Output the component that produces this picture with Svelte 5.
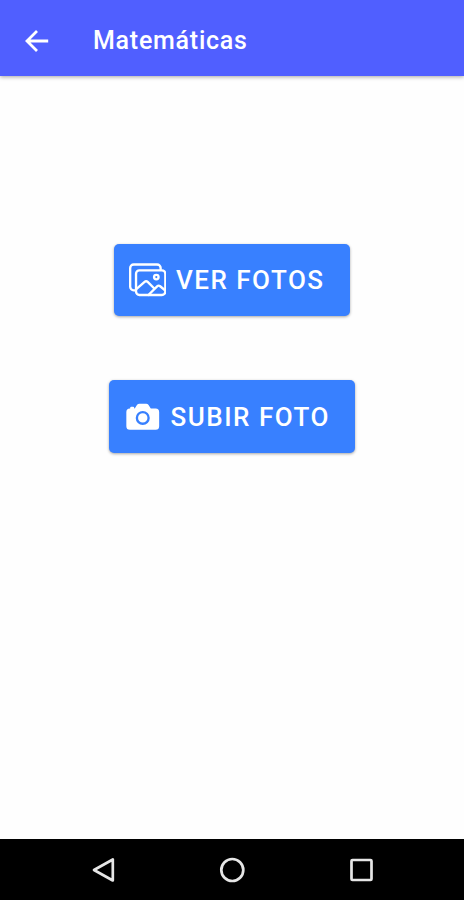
<script lang="ts">
  let title = 'Matemáticas';

  let actions = [
    { icon: 'images', label: 'Ver fotos' },
    { icon: 'camera', label: 'Subir foto' }
  ];
</script>

<div class="screen">
  <header class="toolbar">
    <button class="back" aria-label="Volver">
      <svg viewBox="0 0 24 24" width="24" height="24">
        <path d="M23.2 12H2.5M12 2L2 12l10 10" fill="none" stroke="currentColor" stroke-width="2.8" />
      </svg>
    </button>
    <h1>{title}</h1>
  </header>

  <main>
    {#each actions as action}
      <button class="action">
        {#if action.icon === 'images'}
          <svg class="icon outline" viewBox="0 0 512 512">
            <path d="M432 112V96a48.14 48.14 0 00-48-48H64a48.14 48.14 0 00-48 48v256a48.14 48.14 0 0048 48h16" />
            <rect x="96" y="128" width="400" height="336" rx="46" />
            <ellipse cx="372.9" cy="219.6" rx="30.8" ry="30.6" />
            <path d="M342.15 372.17L255 285.78a30.93 30.93 0 00-42.18-1.21L96 387.64M265.23 464l118.59-117.31a31 31 0 0141.46-1.87L496 402.91" />
          </svg>
        {:else}
          <svg class="icon" viewBox="0 0 512 512">
            <path fill="currentColor" d="M432 144h-59c-3 0-6.72-1.94-9.62-5l-25.94-40.94a15.52 15.52 0 00-1.37-1.85C327.11 85.76 315 80 302 80h-92c-13 0-25.11 5.76-34.07 16.21a15.52 15.52 0 00-1.37 1.85l-25.94 41c-2.22 2.42-5.34 5-8.62 5v-8a16 16 0 00-16-16h-24a16 16 0 00-16 16v8h-4a48.05 48.05 0 00-48 48V384a48.05 48.05 0 0048 48h352a48.05 48.05 0 0048-48V192a48.05 48.05 0 00-48-48z" />
            <circle class="lens" cx="256" cy="272" r="80" />
          </svg>
        {/if}
        <span>{action.label}</span>
      </button>
    {/each}
  </main>

  <nav class="system-bar">
    <svg viewBox="0 0 24 24"><path d="M21.8 1.5v21L3 12z" /></svg>
    <svg viewBox="0 0 24 24"><circle cx="12.3" cy="12" r="11" /></svg>
    <svg viewBox="0 0 24 24"><rect x="2.5" y="2" width="20" height="20" rx="1" /></svg>
  </nav>
</div>

<style>
  :global(body) {
    background: #fefefe;
  }

  .screen {
    display: flex;
    flex-direction: column;
    height: 100vh;
    font-family: Roboto, 'Liberation Sans', sans-serif;
    color: #fff;
  }

  button {
    border: none;
    font-family: inherit;
    color: inherit;
    cursor: pointer;
  }

  .toolbar {
    display: flex;
    align-items: center;
    box-sizing: border-box;
    height: 76px;
    padding: 5px 25px 0;
    gap: 44px;
    background: #505fff;
    box-shadow: 0 1px 4px rgba(0, 0, 0, 0.35);
  }

  .back {
    display: flex;
    padding: 0;
    background: none;
  }

  h1 {
    margin: 0;
    font-size: 25px;
    font-weight: 500;
    letter-spacing: 0.75px;
  }

  main {
    flex: 1;
    display: flex;
    flex-direction: column;
    align-items: center;
    gap: 64px;
    padding-top: 168px;
  }

  .action {
    display: flex;
    align-items: center;
    box-sizing: border-box;
    height: 72.4px;
    padding: 0 25.5px 0 15px;
    gap: 9.5px;
    border-radius: 5px;
    background: #3880ff;
    box-shadow: 0 1px 3px rgba(0, 0, 0, 0.35);
    font-size: 26px;
    font-weight: 500;
    letter-spacing: 1.5px;
    text-transform: uppercase;
  }

  .icon {
    width: 37.5px;
    height: 37.5px;
  }

  .outline {
    fill: none;
    stroke: currentColor;
    stroke-width: 32;
    stroke-linejoin: round;
    stroke-linecap: round;
  }

  .lens {
    fill: none;
    stroke: #3880ff;
    stroke-width: 32;
  }

  .system-bar {
    display: flex;
    justify-content: center;
    align-items: center;
    height: 61px;
    gap: 105px;
    background: #000;
  }

  .system-bar svg {
    width: 24px;
    height: 24px;
    overflow: visible;
    fill: none;
    stroke: #e6e6e6;
    stroke-width: 2.7;
    stroke-linejoin: round;
  }
</style>
